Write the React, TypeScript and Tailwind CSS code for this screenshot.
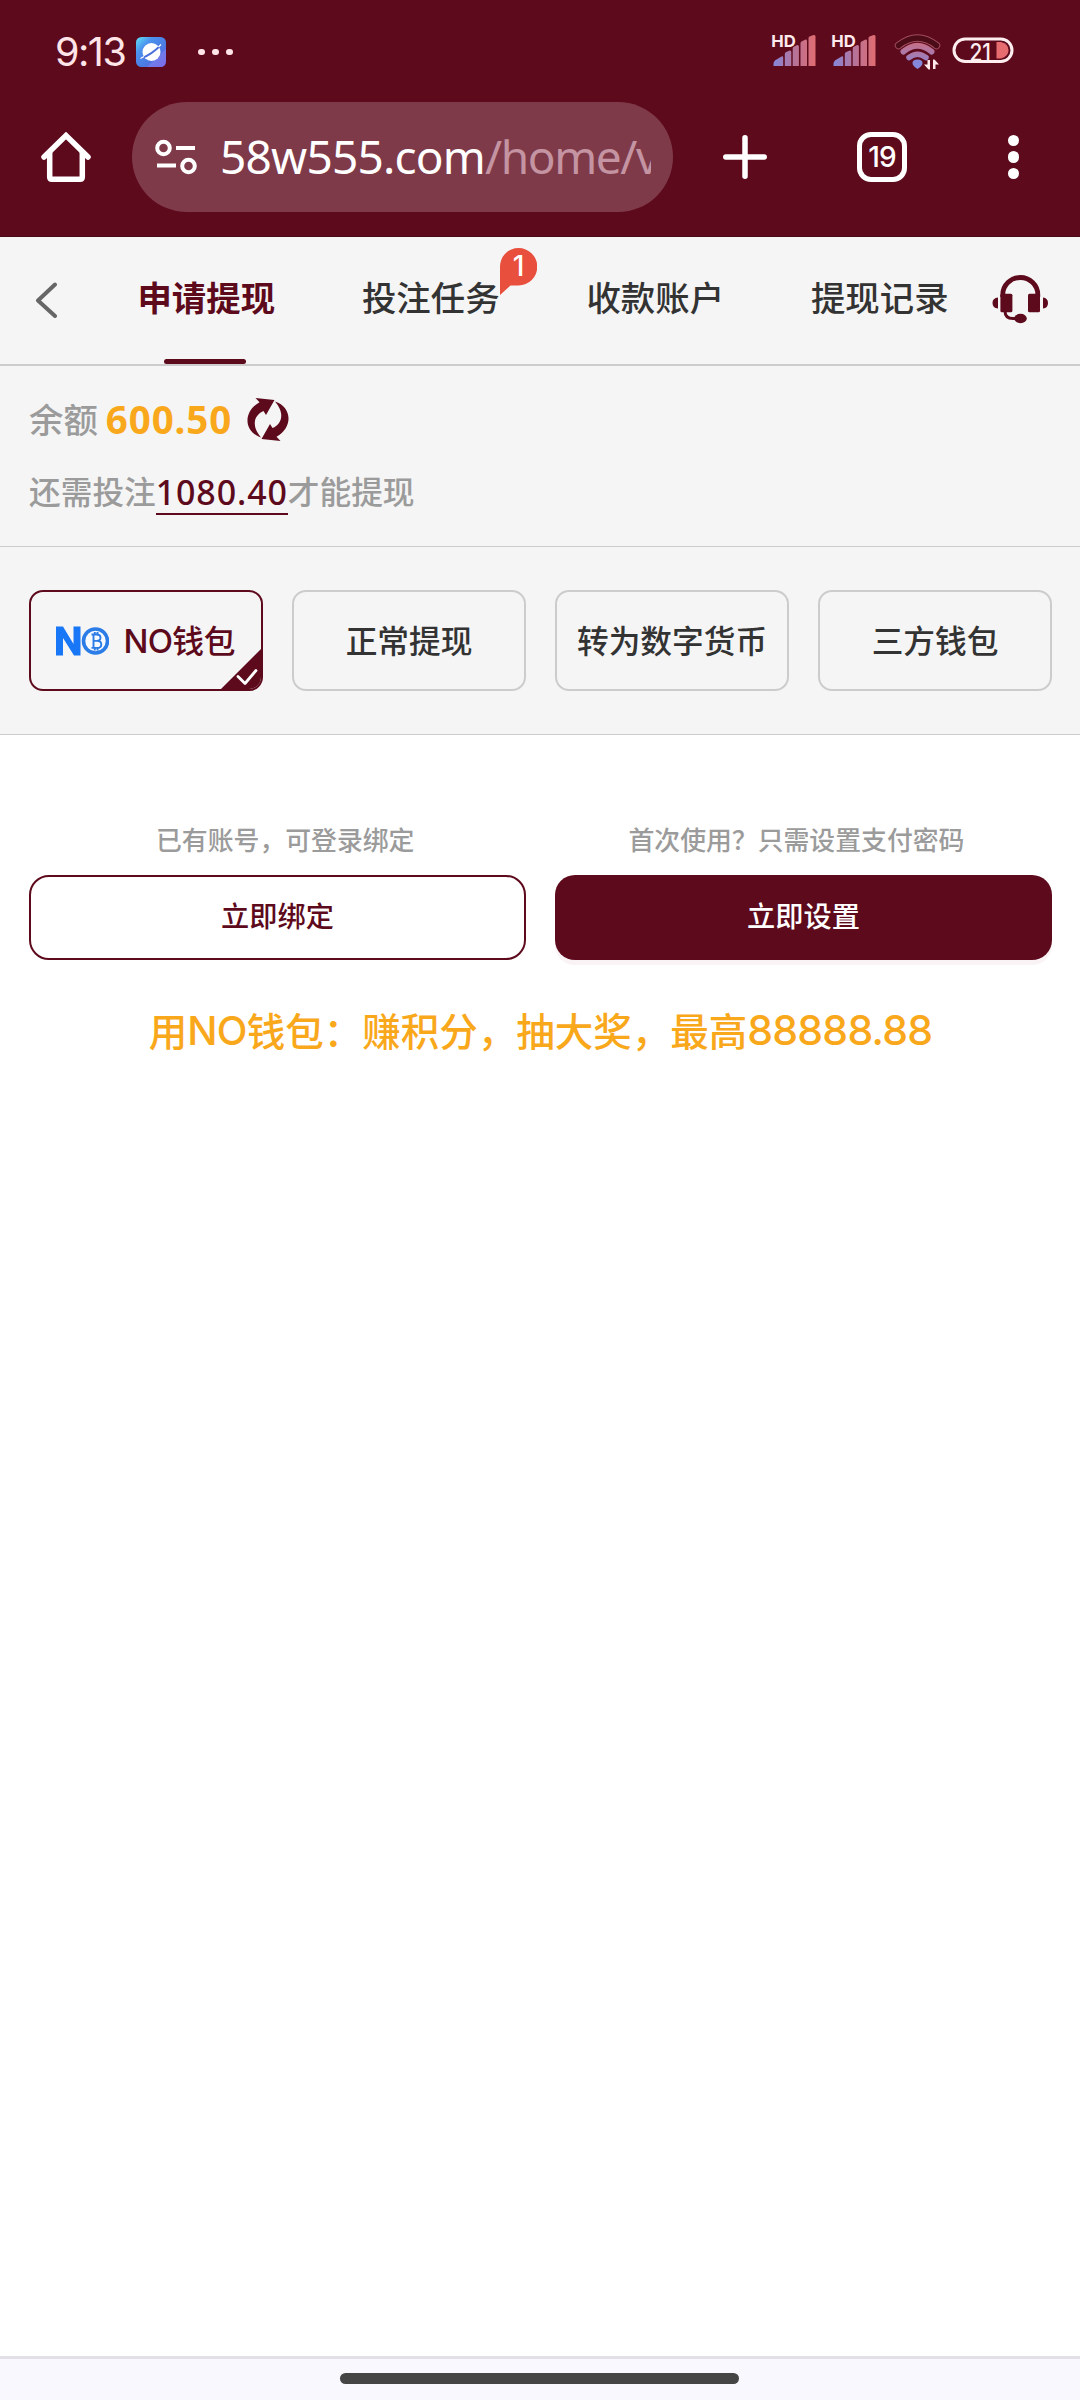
import type { ReactNode } from "react";

const CJK = "font-['Noto_Sans_CJK_SC',sans-serif]";
const HUMANIST = "font-['Noto_Sans','Noto_Sans_CJK_SC',sans-serif]";
const NUM = "font-['Inter','Noto_Sans_CJK_SC',sans-serif]";

function Signal({ x, id }: { x: number; id: string }) {
  return (
    <g transform={`translate(${x} 0)`}>
      <defs>
        <linearGradient id={id} gradientUnits="userSpaceOnUse" x1="1" y1="0" x2="43" y2="0">
          <stop offset="0" stopColor="#8587db" />
          <stop offset="0.5" stopColor="#b6739a" />
          <stop offset="1" stopColor="#e06c70" />
        </linearGradient>
      </defs>
      <g fill={`url(#${id})`}>
        <path d="M1 31v-2q0-3 3-4.500l5-3q1.700-0.800 1.700 1v8.500z" />
        <path d="M12.300 31v-12q0-1.500 1.500-2l3.500-1.500q1.500-0.300 1.500 1.500v14z" />
        <path d="M20.200 31v-17.500q0-1.500 1.500-2l3-1.500q1.700-0.300 1.700 1.500v19.500z" />
        <path d="M28 31v-23q0-1 1-1.500l4-2q1.500-0.500 1.500 1.500v25z" />
        <path d="M36 31v-28q0-1 1-1.500l4-1.500q2-0.500 2 1.500v29.500z" />
      </g>
      <text x="-1.200" y="12.300" fill="#ffe9ec" className="font-['Inter',sans-serif] text-[16.500px] font-bold" textLength="24.500" lengthAdjust="spacingAndGlyphs">
        HD
      </text>
    </g>
  );
}

function StatusIcons() {
  return (
    <svg width="244" height="36" viewBox="0 0 244 36" className="overflow-visible">
      <Signal x={0.5} id="sig-a" />
      <Signal x={60.5} id="sig-b" />
      <defs>
        <linearGradient id="wifi" gradientUnits="userSpaceOnUse" x1="0" y1="32" x2="0" y2="4">
          <stop offset="0" stopColor="#8587db" />
          <stop offset="1" stopColor="#d36b78" />
        </linearGradient>
      </defs>
      <path d="M126.500 10.500Q145.500-4.500 164.500 10.500" fill="none" stroke="#a04d5e" strokeWidth="7.500" strokeLinecap="round" />
      <path d="M126.500 10.500Q145.500-4.500 164.500 10.500" fill="none" stroke="#4b0b17" strokeWidth="5.500" strokeLinecap="round" />
      <path d="M131.500 16.500Q145.500 5 159.500 16.500" fill="none" stroke="url(#wifi)" strokeWidth="6" strokeLinecap="round" />
      <path d="M137 22.500Q145.500 16 154 22.500" fill="none" stroke="url(#wifi)" strokeWidth="5.500" strokeLinecap="round" />
      <path d="M145.500 24.500q5 0 5 3.500q0 3-5 6q-5-3-5-6q0-3.500 5-3.500z" fill="#8587db" />
      <path d="M158 25v9.500h-1.500l-4.500-5h3.500v-4.500zM161 34v-9.500h1.500l4.500 5h-3.500v4.500z" fill="#ffe9ec" />
      <rect x="182" y="4" width="58" height="22.500" rx="11.200" fill="none" stroke="#ffeef0" strokeWidth="3" />
      <path d="M224.500 7h4.500q7.500 2 7.500 8.200t-7.500 8.200h-4.500z" fill="#e66c70" />
      <text x="197.500" y="25.500" fill="#ffeef0" className="font-['Inter',sans-serif] text-[24px] font-medium" textLength="21.500" lengthAdjust="spacingAndGlyphs">
        21
      </text>
    </svg>
  );
}

function AppIcon() {
  return (
    <svg width="30" height="30" viewBox="0 0 30 30">
      <defs>
        <linearGradient id="app" x1="0" y1="0" x2="1" y2="1">
          <stop offset="0" stopColor="#63e4f5" />
          <stop offset="0.280" stopColor="#4b93ee" />
          <stop offset="0.600" stopColor="#4c7be4" />
          <stop offset="1" stopColor="#7350e8" />
        </linearGradient>
      </defs>
      <rect width="30" height="30" rx="5.500" fill="url(#app)" />
      <path d="M11 30L30 12v12.500a5.500 5.500 0 0 1-5.500 5.500z" fill="#8f8df0" opacity="0.450" />
      <circle cx="15.500" cy="15" r="9" fill="#fff" />
      <path d="M5 21.500Q15 18 25 8" stroke="#4a6fdc" strokeWidth="1.800" fill="none" />
      <path d="M4.500 21.500l3.500-2M22.500 10l2.500-2.500" stroke="#fff" strokeWidth="1.300" />
    </svg>
  );
}

function BrowserHeader() {
  return (
    <header className="h-[237px] border-b border-[#4a0b18] bg-[#5d0a1c]">
      <div className="flex h-[102px] items-center pt-[2px] pr-[64px] pl-[55px]">
        <span className={`${NUM} w-[81px] pt-[2px] text-[39.500px] leading-none tracking-[-1.500px] text-[#ffe4e8]`}>9:13</span>
        <AppIcon />
        <div className="ml-[32px] flex gap-[7.500px]">
          <i className="size-[6.500px] rounded-full bg-[#ffe4e8]" />
          <i className="size-[6.500px] rounded-full bg-[#ffe4e8]" />
          <i className="size-[6.500px] rounded-full bg-[#ffe4e8]" />
        </div>
        <div className="ml-auto pt-px">
          <StatusIcons />
        </div>
      </div>
      <div className="flex h-[110px] items-center">
        <svg width="50" height="50" viewBox="0 0 50 50" className="ml-[41px]" fill="none" stroke="#fff" strokeWidth="5.500">
          <path d="M3 25L25 3.500L47 25" strokeLinecap="round" strokeLinejoin="miter" />
          <path d="M8.700 20v25q0 2.200 2.200 2.200h28.200q2.200 0 2.200-2.200V20" />
        </svg>
        <div className="ml-[41px] flex h-[110px] w-[541px] items-center rounded-full bg-[#7f3a49] pr-[22px] pl-[23px]">
          <svg width="42" height="36" viewBox="0 0 42 36" fill="none" stroke="#fff" strokeWidth="4">
            <circle cx="8.500" cy="9" r="6.300" />
            <path d="M21 9h19M2 26.500h19" />
            <circle cx="33.500" cy="27" r="6.300" />
          </svg>
          <div className={`${HUMANIST} ml-[22px] h-[64px] w-[432px] overflow-hidden pl-px text-[46px] leading-[62px] whitespace-nowrap text-white`}>
            <span className="tracking-[-0.800px]">58w555.com</span>
            <span className="tracking-[-1.400px] text-[#c494a2]">/home/v</span>
          </div>
        </div>
        <svg width="44" height="44" viewBox="0 0 44 44" className="ml-[50px]" stroke="#fff" strokeWidth="5.500" strokeLinecap="round">
          <path d="M22 2.800v38.400M2.800 22h38.400" />
        </svg>
        <div className="ml-[90px] flex size-[50px] items-center justify-center rounded-[14px] border-[5.500px] border-white">
          <span className={`${NUM} text-[28px] leading-none font-medium tracking-[-1px] text-white`}>19</span>
        </div>
        <div className="ml-[101px] flex flex-col gap-[5.300px]">
          <i className="size-[11.200px] rounded-full bg-white" />
          <i className="size-[11.200px] rounded-full bg-white" />
          <i className="size-[11.200px] rounded-full bg-white" />
        </div>
      </div>
    </header>
  );
}

function TabBar() {
  const tab = "relative flex flex-1 items-center justify-center pb-[9px]";
  return (
    <nav className={`${CJK} flex h-[129px] border-b-2 border-[#cccccc] text-[34.400px] leading-none font-medium text-[#333333]`}>
      <div className="flex w-[94px] items-center pl-[35px]">
        <svg width="24" height="36" viewBox="0 0 24 36" fill="none" stroke="#666" strokeWidth="4" strokeLinecap="round" strokeLinejoin="round" className="-mt-[2px]">
          <path d="M20 2.500L3 18.500L20 34" />
        </svg>
      </div>
      <div className="flex w-[898px]">
        <div className={`${tab} font-bold text-[#5d0a1c]`}>
          申请提现
          <i className="absolute bottom-0 left-[70px] h-[5px] w-[82px] rounded-full bg-[#5d0a1c]" />
        </div>
        <div className={tab}>
          投注任务
          <span className="absolute top-[11px] left-[181.500px] h-[47px] w-[37px]">
            <svg width="37" height="47" viewBox="0 0 37 47" className="absolute">
              <path d="M18.500 0a18.500 18.500 0 0 1 0 37.500H10.500L0 47V18.500A18.500 18.500 0 0 1 18.500 0z" fill="#e94f3d" />
            </svg>
            <span className={`${NUM} relative block h-[37px] text-center text-[28px] leading-[37px] font-medium text-white`}>1</span>
          </span>
        </div>
        <div className={tab}>收款账户</div>
        <div className={tab}>提现记录</div>
      </div>
      <svg width="56" height="49" viewBox="0 0 56 49" className="mt-[38px]" fill="#5d0a1c">
        <path d="M10.800 22v-2.500a17.500 17 0 0 1 35 0V22" fill="none" stroke="#5d0a1c" strokeWidth="4.800" />
        <rect x="8.400" y="18.700" width="12" height="18.500" rx="1.500" />
        <rect x="36" y="18.700" width="12" height="18.500" rx="1.500" />
        <path d="M6 22.500v11q-5.500-0.500-5.500-5.500t5.500-5.500zM51 22.500v11q5-0.500 5-5.500t-5-5.500z" />
        <path d="M13 36q0 7.500 8 7.500h5" fill="none" stroke="#5d0a1c" strokeWidth="3" />
        <ellipse cx="28.500" cy="43.500" rx="6.300" ry="4.700" />
      </svg>
    </nav>
  );
}

function RefreshIcon() {
  const arrow = "M8.500 0L27.500 2L19 17L16.500 13C7.500 17 3.500 27 14 39.500C-3 34-4.500 14 12.500 4.200Z";
  return (
    <svg width="43" height="43" viewBox="0 0 43 43" fill="#5d0a1c">
      <path d={arrow} />
      <path d={arrow} transform="rotate(180 21 21.500)" />
    </svg>
  );
}

function Balance() {
  return (
    <section className={`${CJK} h-[181px] border-b border-[#cccccc] pl-[29px] font-medium text-[#9b9b9b]`}>
      <div className="flex h-[106px] items-center">
        <span className="pb-[2px] text-[34.400px] leading-none">余额</span>
        <span className={`${HUMANIST} ml-[8px] w-[141px] text-[38.500px] leading-none font-bold tracking-[0.900px] text-[#f9a81c]`}>600.50</span>
        <RefreshIcon />
      </div>
      <div className="flex h-[40px] items-center text-[31.700px] leading-none">
        <span className="pb-[3px]">还需投注</span>
        <span className={`${HUMANIST} relative mt-px flex h-[45px] w-[132px] shrink-0 items-center justify-center border-b-2 border-[#5d0a1c] text-[34px] tracking-[0.900px] text-[#5d0a1c]`}>1080.40</span>
        <span className="pb-[3px]">才能提现</span>
      </div>
    </section>
  );
}

function NoLogo() {
  return (
    <svg width="53" height="30" viewBox="0 0 53 30" fill="#1877f6">
      <path d="M0 29.500V0.500h7L17.500 18V0.500h7v29h-6.500L7 12v17.500z" />
      <circle cx="39.500" cy="15" r="12" fill="#f7faff" stroke="#2b7ce6" strokeWidth="3.600" />
      <path d="M35.500 8.500h5q4 0 4 3.200t-4 3.200h-3h3.500q4.300 0 4.300 3.500t-4.300 3.500h-5.500M37.500 8.500v13.500M38.800 6v2.500M41.500 6v2.500M38.800 22v2.500M41.500 22v2.500" fill="none" stroke="#2b7ce6" strokeWidth="1.900" />
    </svg>
  );
}

function Method({ active, children }: { active?: boolean; children: ReactNode }) {
  return (
    <button
      className={
        active
          ? "relative flex h-[101px] items-center justify-center overflow-hidden rounded-[14px] border-2 border-[#5d0a1c] text-[#5d0a1c]"
          : "relative flex h-[101px] items-center justify-center overflow-hidden rounded-[14px] border-2 border-[#cccccc] pb-[2px] text-[#333333]"
      }
    >
      {children}
      {active && (
        <svg width="42" height="42" viewBox="0 0 42 42" className="absolute -right-px -bottom-px">
          <path d="M42 0V42H0z" fill="#5d0a1c" />
          <path d="M18 28.500l7 7L36 22.500" fill="none" stroke="#fff" strokeWidth="2.800" strokeLinecap="round" strokeLinejoin="round" />
        </svg>
      )}
    </button>
  );
}

function Methods() {
  return (
    <section className={`${CJK} grid h-[188px] grid-cols-4 gap-[29px] border-b border-[#cccccc] pr-[28px] pl-[29px] pt-[43px] text-[31.700px] leading-none font-medium whitespace-nowrap`}>
      <Method active>
        <NoLogo />
        <span className="ml-[14px] flex items-center pb-px">
          <span className={`${NUM} pt-[2px] text-[33px] tracking-[-0.800px]`}>NO</span>钱包
        </span>
      </Method>
      <Method>正常提现</Method>
      <Method>转为数字货币</Method>
      <Method>三方钱包</Method>
    </section>
  );
}

function Content() {
  return (
    <main className={`${CJK} h-[1621px] bg-white pr-[28px] pl-[29px] pt-[91px] leading-none`}>
      <div className="flex h-[26px] items-center text-[25.850px] font-medium whitespace-nowrap text-[#9b9b9b]">
        <span className="ml-[127px]">已有账号，可登录绑定</span>
        <span className="ml-[214px]">首次使用？只需设置支付密码</span>
      </div>
      <div className="mt-[23px] grid grid-cols-2 gap-[29px] text-[28.200px] font-medium">
        <button className="h-[85px] rounded-[20px] border-2 border-[#5d0a1c] pb-[5px] text-[#5d0a1c]">立即绑定</button>
        <button className="h-[85px] rounded-[20px] bg-[#5d0a1c] pb-[5px] text-white shadow-[0_5px_0_#faf3f5]">立即设置</button>
      </div>
      <p className="mt-[43px] flex h-[52px] items-center justify-center text-[38.500px] font-medium whitespace-nowrap text-[#f9a81c]">
        <span className="flex items-center">
          用<span className={`${NUM} pt-[3px] text-[40px] tracking-[-0.700px]`}>NO</span>钱包：赚积分，抽大奖，最高
        </span>
        <span className={`${NUM} pt-[3px] text-[41px] tracking-[-0.750px]`}>88888.88</span>
      </p>
    </main>
  );
}

export default function App() {
  return (
    <div lang="zh-CN" className="h-[2400px] w-[1080px] overflow-hidden bg-[#f5f5f5]">
      <BrowserHeader />
      <TabBar />
      <Balance />
      <Methods />
      <Content />
      <footer className="flex h-[44px] justify-center border-t-3 border-[#e2e0e6] bg-[#faf8ff] pt-[14px]">
        <i className="mr-px h-[10.500px] w-[399px] rounded-full bg-[#454545]" />
      </footer>
    </div>
  );
}
